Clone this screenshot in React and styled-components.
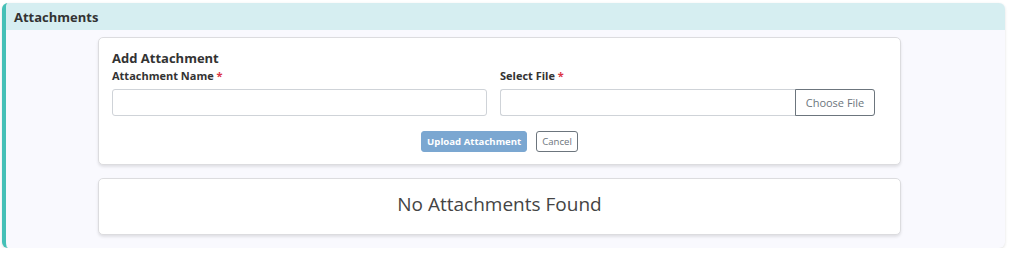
import React, { useState } from 'react';
import styled, { createGlobalStyle } from 'styled-components';

const GlobalStyle = createGlobalStyle`
  body {
    margin: 0;
    background: #ffffff;
    font-family: 'Open Sans', 'Noto Sans', sans-serif;
    color: #333;
  }
`;

export default function App() {
  const [form, setForm] = useState({ name: '', file: '' });
  const attachments = [];

  return (
    <>
      <GlobalStyle />
      <Panel>
        <PanelHeader>Attachments</PanelHeader>
        <PanelBody>
          <Card>
            <CardTitle>Add Attachment</CardTitle>
            <FieldGrid>
              <Field>
                <Label>
                  Attachment Name <Req>*</Req>
                </Label>
                <TextInput
                  value={form.name}
                  onChange={(e) => setForm({ ...form, name: e.target.value })}
                />
              </Field>
              <Field>
                <Label>
                  Select File <Req>*</Req>
                </Label>
                <FileBox>
                  <FileName>{form.file}</FileName>
                  <ChooseButton>Choose File</ChooseButton>
                </FileBox>
              </Field>
            </FieldGrid>
            <Actions>
              <Button primary disabled>
                Upload Attachment
              </Button>
              <Button>Cancel</Button>
            </Actions>
          </Card>
          <EmptyCard>
            {attachments.length === 0 && 'No Attachments Found'}
          </EmptyCard>
        </PanelBody>
      </Panel>
    </>
  );
}

const Panel = styled.div`
  margin: 3px 8px 0 2px;
  border-left: 4px solid #45c0b7;
  border-radius: 6px;
  overflow: hidden;
  background: #f9f9fe;
  box-shadow: 0 1px 3px rgba(0, 0, 0, 0.12);
`;

const PanelHeader = styled.div`
  height: 27px;
  display: flex;
  align-items: center;
  padding-left: 8px;
  background: #d6eef1;
  font-size: 13px;
  font-weight: 700;
  color: #333;
`;

const PanelBody = styled.div`
  display: flex;
  flex-direction: column;
  gap: 13px;
  padding: 7px 0 13px 92px;
`;

const Card = styled.div`
  width: 803px;
  box-sizing: border-box;
  background: #fff;
  border: 1px solid #dcdcdf;
  border-radius: 5px;
  box-shadow: 0 2px 3px rgba(0, 0, 0, 0.1);
  padding: 11px 13px 12px 13px;
`;

const CardTitle = styled.div`
  font-size: 13px;
  line-height: 18px;
  font-weight: 700;
  color: #333;
`;

const FieldGrid = styled.div`
  display: grid;
  grid-template-columns: 375px 375px;
  column-gap: 13px;
`;

const Field = styled.div`
  display: flex;
  flex-direction: column;
`;

const Label = styled.label`
  font-size: 11px;
  line-height: 18px;
  font-weight: 700;
  color: #333;
  margin-bottom: 4px;
`;

const Req = styled.span`
  color: #dc3545;
`;

const TextInput = styled.input`
  height: 27px;
  box-sizing: border-box;
  border: 1px solid #cfd3d8;
  border-radius: 3px;
  padding: 0 8px;
  font-family: inherit;
  font-size: 12px;
  outline: none;
`;

const FileBox = styled.div`
  display: flex;
  height: 27px;
  box-sizing: border-box;
  border: 1px solid #cfd3d8;
  border-right: none;
  border-radius: 3px;
`;

const FileName = styled.div`
  flex: 1;
`;

const ChooseButton = styled.div`
  width: 80px;
  margin: -1px 0;
  box-sizing: border-box;
  border: 1px solid #6c757d;
  border-radius: 0 3px 3px 0;
  display: flex;
  align-items: center;
  justify-content: center;
  font-size: 11px;
  color: #6c757d;
  background: #fff;
`;

const Actions = styled.div`
  display: flex;
  justify-content: center;
  gap: 9px;
  margin-top: 15px;
`;

const Button = styled.button`
  height: 21px;
  padding: 0 5px;
  font-family: inherit;
  font-size: 9.6px;
  font-weight: ${(p) => (p.primary ? 700 : 400)};
  color: ${(p) => (p.primary ? '#fff' : '#6c757d')};
  background: ${(p) => (p.primary ? '#7ba7d1' : '#fff')};
  border: 1px solid ${(p) => (p.primary ? '#7ba7d1' : '#6c757d')};
  border-radius: 3px;
  cursor: pointer;
`;

const EmptyCard = styled(Card)`
  height: 57px;
  padding: 0 0 5px;
  display: flex;
  align-items: center;
  justify-content: center;
  font-size: 19px;
  color: #444;
`;
